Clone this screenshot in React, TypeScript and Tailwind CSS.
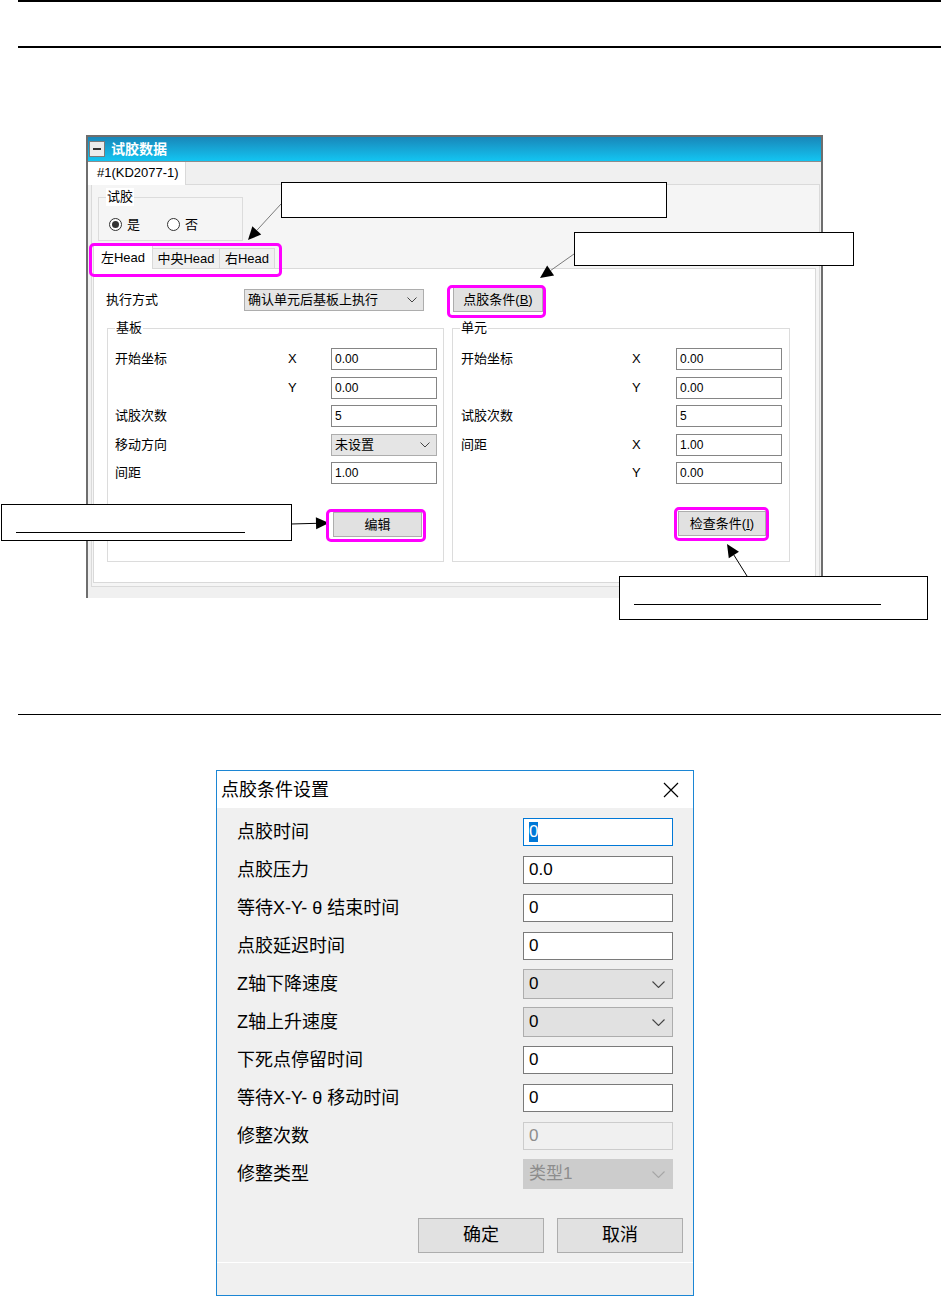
import React from "react"

type Pt = [number, number]

const headPoints = (from: Pt, to: Pt, len = 13, half = 6) => {
  const dx = to[0] - from[0]
  const dy = to[1] - from[1]
  const d = Math.hypot(dx, dy)
  const ux = dx / d
  const uy = dy / d
  const bx = to[0] - ux * len
  const by = to[1] - uy * len
  return {
    base: [bx, by] as Pt,
    points: `${to[0]},${to[1]} ${bx - uy * half},${by + ux * half} ${bx + uy * half},${by - ux * half}`,
  }
}

const arrows: { from: Pt; to: Pt; stroke: string }[] = [
  { from: [281, 204], to: [248, 240], stroke: "#7a7a7a" },
  { from: [574, 254], to: [540, 278], stroke: "#7a7a7a" },
  { from: [291, 524], to: [329, 523], stroke: "#000" },
  { from: [747, 576], to: [727, 544], stroke: "#000" },
]

function Chevron({ color = "#444", big }: { color?: string; big?: boolean }) {
  if (big) {
    return (
      <svg width="13" height="7" viewBox="0 0 13 7" fill="none">
        <path d="M0.5 0.5L6.5 6.5L12.5 0.5" stroke={color} strokeWidth="1.1" />
      </svg>
    )
  }
  return (
    <svg width="10" height="6" viewBox="0 0 10 6" fill="none">
      <path d="M0.5 0.5L5 5L9.5 0.5" stroke={color} strokeWidth="1" />
    </svg>
  )
}

function SmallInput({ value }: { value: string }) {
  return (
    <div className="h-[22px] w-[106px] border border-[#858585] bg-white pl-[3px] text-[12px] leading-[20px]">
      {value}
    </div>
  )
}

function SmallCombo({ value, width }: { value: string; width: string }) {
  return (
    <div className={`flex h-[22px] items-center justify-between border border-[#adadad] bg-[#e5e5e5] pl-[3px] pr-[6px] text-[13px] ${width}`}>
      <span>{value}</span>
      <Chevron />
    </div>
  )
}

function Radio({ checked, label }: { checked?: boolean; label: string }) {
  return (
    <div className="flex items-center gap-[5px]">
      <div className="flex h-[13px] w-[13px] items-center justify-center rounded-full border border-[#333] bg-white">
        {checked && <div className="h-[7px] w-[7px] rounded-full bg-[#333]" />}
      </div>
      <span className="text-[13px]">{label}</span>
    </div>
  )
}

function GroupBox({ title, className, children }: { title: string; className: string; children: React.ReactNode }) {
  return (
    <div className={`relative border border-[#dcdcdc] ${className}`}>
      <span className="absolute left-[7px] top-[-10px] bg-white px-[1px] text-[13px] leading-[18px]">{title}</span>
      {children}
    </div>
  )
}

type CoordRow = { label: string; axis: string; field: React.ReactNode }

function CoordGrid({ rows, cols }: { rows: CoordRow[]; cols: string }) {
  return (
    <div className={`grid gap-y-[6.5px] text-[13px] ${cols}`}>
      {rows.map((row, i) => (
        <React.Fragment key={i}>
          <span className="leading-[22px]">{row.label}</span>
          <span className="leading-[22px]">{row.axis}</span>
          {row.field}
        </React.Fragment>
      ))}
    </div>
  )
}

function WinButton({ children, className }: { children: React.ReactNode; className: string }) {
  return (
    <button type="button" className={`h-[25px] border border-[#adadad] bg-[#e1e1e1] text-[13px] leading-none ${className}`}>
      {children}
    </button>
  )
}

function TestDataWindow() {
  const boardRows: CoordRow[] = [
    { label: "开始坐标", axis: "X", field: <SmallInput value="0.00" /> },
    { label: "", axis: "Y", field: <SmallInput value="0.00" /> },
    { label: "试胶次数", axis: "", field: <SmallInput value="5" /> },
    { label: "移动方向", axis: "", field: <SmallCombo value="未设置" width="w-[106px]" /> },
    { label: "间距", axis: "", field: <SmallInput value="1.00" /> },
  ]
  const unitRows: CoordRow[] = [
    { label: "开始坐标", axis: "X", field: <SmallInput value="0.00" /> },
    { label: "", axis: "Y", field: <SmallInput value="0.00" /> },
    { label: "试胶次数", axis: "", field: <SmallInput value="5" /> },
    { label: "间距", axis: "X", field: <SmallInput value="1.00" /> },
    { label: "", axis: "Y", field: <SmallInput value="0.00" /> },
  ]

  return (
    <div className="flex h-[463px] w-[737px] flex-col border-x-2 border-t-2 border-[#6e6e6e] bg-[#f0f0f0]">
      <div className="flex h-[25px] items-center border-b border-[#8c8c8c] bg-gradient-to-b from-[#1887b9] to-[#12c5f2]">
        <div className="ml-[1px] flex h-[16px] w-[16px] items-center justify-center border border-[#7a7a7a] bg-[#ececec]">
          <div className="h-[2px] w-[8px] bg-[#333]" />
        </div>
        <span className="ml-[6px] text-[14px] font-bold leading-none text-white">试胶数据</span>
      </div>

      <div className="flex h-[22px] items-stretch">
        <div className="relative z-10 -mb-px w-[98px] border-r border-[#d9d9d9] bg-white pl-[9px] text-[13px] leading-[22px]">
          #1(KD2077-1)
        </div>
      </div>

      <div className="ml-[3px] flex h-[403px] w-[729px] flex-col border border-[#dadada] bg-[#f5f5f5]">
        <div className="ml-[6px] mt-[12px] h-[44px] w-[145px]">
          <GroupBox title="试胶" className="h-full w-full bg-[#f5f5f5]">
            <div className="ml-[10px] mt-[17px] flex gap-[27px]">
              <Radio checked label="是" />
              <Radio label="否" />
            </div>
          </GroupBox>
        </div>

        <div className="relative z-10 -mb-px ml-px mt-[5px] flex h-[23px] items-end text-[13px]">
          <div className="flex h-[24px] w-[60px] items-center justify-center border border-b-0 border-[#d9d9d9] bg-white">左Head</div>
          <div className="flex h-[21px] w-[67px] items-center justify-center border border-l-0 border-[#d9d9d9] bg-[#f0f0f0]">中央Head</div>
          <div className="flex h-[21px] w-[55px] items-center justify-center border border-l-0 border-[#d9d9d9] bg-[#f0f0f0]">右Head</div>
        </div>

        <div className="ml-px h-[315px] w-[723px] border border-[#d9d9d9] bg-white">
          <div className="ml-[12px] mt-[18px] flex items-center text-[13px]">
            <span className="w-[138px]">执行方式</span>
            <SmallCombo value="确认单元后基板上执行" width="w-[180px]" />
            <WinButton className="ml-[29px] w-[90px]">
              点胶条件(<span className="underline">B</span>)
            </WinButton>
          </div>

          <div className="ml-[13px] mt-[16px] flex gap-[8px]">
            <GroupBox title="基板" className="h-[234px] w-[337px]">
              <div className="pl-[7px] pt-[19px]">
                <CoordGrid rows={boardRows} cols="grid-cols-[173px_43px_106px]" />
                <WinButton className="ml-[218px] mt-[28px] w-[89px]">编辑</WinButton>
              </div>
            </GroupBox>
            <GroupBox title="单元" className="h-[234px] w-[338px]">
              <div className="pl-[8px] pt-[19px]">
                <CoordGrid rows={unitRows} cols="grid-cols-[171px_44px_106px]" />
                <WinButton className="ml-[217px] mt-[27px] w-[88px]">
                  检查条件(<span className="underline">I</span>)
                </WinButton>
              </div>
            </GroupBox>
          </div>
        </div>
      </div>
    </div>
  )
}

type FieldKind = "selected" | "text" | "combo" | "disabledText" | "disabledCombo"

const dialogRows: { label: string; value: string; kind: FieldKind }[] = [
  { label: "点胶时间", value: "0", kind: "selected" },
  { label: "点胶压力", value: "0.0", kind: "text" },
  { label: "等待X-Y- θ 结束时间", value: "0", kind: "text" },
  { label: "点胶延迟时间", value: "0", kind: "text" },
  { label: "Z轴下降速度", value: "0", kind: "combo" },
  { label: "Z轴上升速度", value: "0", kind: "combo" },
  { label: "下死点停留时间", value: "0", kind: "text" },
  { label: "等待X-Y- θ 移动时间", value: "0", kind: "text" },
  { label: "修整次数", value: "0", kind: "disabledText" },
  { label: "修整类型", value: "类型1", kind: "disabledCombo" },
]

function DialogField({ value, kind }: { value: string; kind: FieldKind }) {
  if (kind === "combo" || kind === "disabledCombo") {
    const disabled = kind === "disabledCombo"
    return (
      <div
        className={`-mt-px flex h-[30px] items-center justify-between border pl-[5px] pr-[7px] text-[17px] ${
          disabled ? "border-[#cccccc] bg-[#cccccc] text-[#8d8d8d]" : "border-[#adadad] bg-[#e1e1e1]"
        }`}
      >
        <span>{value}</span>
        <Chevron big color={disabled ? "#a6a6a6" : "#444"} />
      </div>
    )
  }
  if (kind === "selected") {
    return (
      <div className="flex h-[28px] items-center border border-[#0078d7] bg-white pl-[5px] text-[17px]">
        <span className="bg-[#0078d7] leading-[20px] text-white">{value}</span>
      </div>
    )
  }
  if (kind === "disabledText") {
    return (
      <div className="flex h-[28px] items-center border border-[#cccccc] bg-[#f0f0f0] pl-[5px] text-[17px] text-[#8d8d8d]">
        {value}
      </div>
    )
  }
  return (
    <div className="flex h-[28px] items-center border border-[#7a7a7a] bg-white pl-[5px] text-[17px]">{value}</div>
  )
}

function DispenseDialog() {
  return (
    <div className="flex h-[526px] w-[478px] flex-col border border-[#1c86d4] bg-[#f0f0f0]">
      <div className="flex h-[37px] items-center justify-between bg-white pl-[4px] pr-[14px]">
        <span className="text-[18px] leading-none">点胶条件设置</span>
        <svg width="16" height="16" viewBox="0 0 16 16" fill="none">
          <path d="M1 1L15 15M15 1L1 15" stroke="#000" strokeWidth="1.2" />
        </svg>
      </div>

      <div className="pl-[20px] pt-[10px]">
        {dialogRows.map((row) => (
          <div key={row.label} className="grid h-[38px] grid-cols-[286px_150px] items-start">
            <span className="text-[18px] leading-[28px]">{row.label}</span>
            <DialogField value={row.value} kind={row.kind} />
          </div>
        ))}
      </div>

      <div className="mt-[20px] flex justify-end gap-[13px] pr-[10px]">
        <button type="button" className="h-[35px] w-[126px] border border-[#adadad] bg-[#e1e1e1] text-[18px]">
          确定
        </button>
        <button type="button" className="h-[35px] w-[126px] border border-[#adadad] bg-[#e1e1e1] text-[18px]">
          取消
        </button>
      </div>
      <div className="mt-[9px] h-px bg-white" />
    </div>
  )
}

function Annotations() {
  return (
    <>
      <svg className="pointer-events-none absolute left-0 top-0 z-20" width="946" height="1296">
        {arrows.map((a, i) => {
          const h = headPoints(a.from, a.to)
          return (
            <g key={i}>
              <line x1={a.from[0]} y1={a.from[1]} x2={h.base[0]} y2={h.base[1]} stroke={a.stroke} strokeWidth="1" />
              <polygon points={h.points} fill="#000" />
            </g>
          )
        })}
      </svg>

      <div className="absolute left-[281px] top-[182px] z-20 h-[36px] w-[386px] border border-black bg-white" />
      <div className="absolute left-[574px] top-[232px] z-20 h-[34px] w-[280px] border border-black bg-white" />
      <div className="absolute left-[1px] top-[504px] z-20 h-[37px] w-[291px] border border-black bg-white">
        <div className="ml-[14px] mt-[27px] h-px w-[229px] bg-black" />
      </div>
      <div className="absolute left-[619px] top-[576px] z-20 h-[44px] w-[309px] border border-black bg-white">
        <div className="ml-[14px] mt-[27px] h-px w-[247px] bg-black" />
      </div>

      <div className="absolute left-[89px] top-[243px] z-20 h-[34px] w-[193px] rounded-[5px] border-[3px] border-[#ff00ff]" />
      <div className="absolute left-[447px] top-[285px] z-20 h-[33px] w-[99px] rounded-[5px] border-[3px] border-[#ff00ff]" />
      <div className="absolute left-[326px] top-[509px] z-20 h-[33px] w-[100px] rounded-[5px] border-[3px] border-[#ff00ff]" />
      <div className="absolute left-[674px] top-[507px] z-20 h-[34px] w-[95px] rounded-[5px] border-[3px] border-[#ff00ff]" />
    </>
  )
}

export default function App() {
  return (
    <div className="relative h-[1296px] w-[946px] overflow-hidden bg-white font-['Liberation_Sans','Noto_Sans_CJK_SC',sans-serif] text-black">
      <div className="ml-[18px] h-[2px] w-[923px] bg-black" />
      <div className="ml-[18px] mt-[44px] h-[2px] w-[923px] bg-black" />
      <div className="ml-[86px] mt-[87px]">
        <TestDataWindow />
      </div>
      <div className="ml-[18px] mt-[116px] h-px w-[923px] bg-black" />
      <div className="ml-[216px] mt-[55px]">
        <DispenseDialog />
      </div>
      <Annotations />
    </div>
  )
}
